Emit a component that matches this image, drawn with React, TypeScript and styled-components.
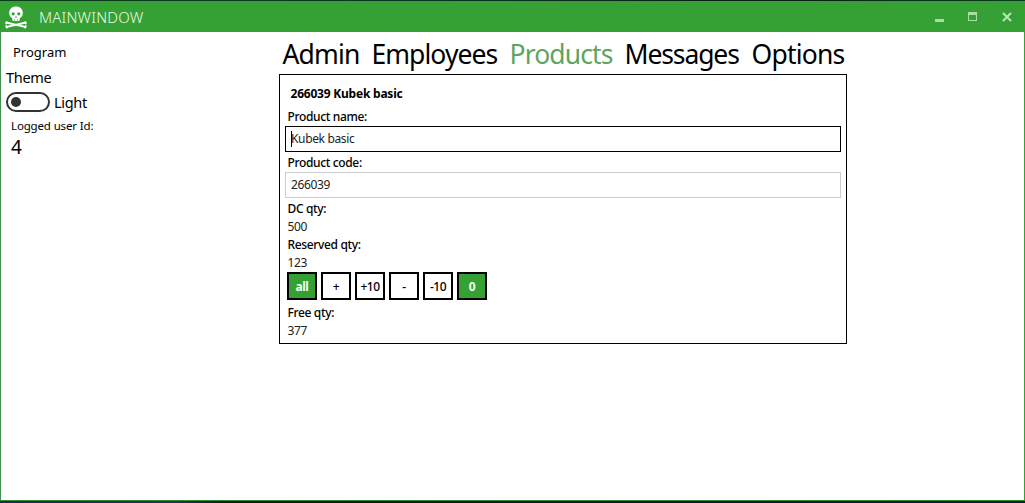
import React from 'react';
import styled, { createGlobalStyle } from 'styled-components';

const GlobalStyle = createGlobalStyle`
  * { box-sizing: border-box; }
  html, body { margin: 0; padding: 0; overflow: hidden; background: #0b1f26; }
  body, button, input { font-family: "Noto Sans", "Open Sans", sans-serif; color: #000; }
`;

const Desktop = styled.div`
  width: 1025px;
  height: 503px;
  padding: 1px 0 2px;
  background: linear-gradient(90deg, #0a3a1c, #0c3322 40%, #071c12 75%, #0b3a1c) top / 100% 1px no-repeat,
    linear-gradient(90deg, #14304a, #1b3a50 17%, #071c12 22%, #081a1c 60%, #0b1c2c) bottom / 100% 2px no-repeat;
`;

const Window = styled.div`
  height: 500px;
  display: flex;
  flex-direction: column;
  background: #fff;
  border: solid #32a032;
  border-width: 0 1px 1px;
  border-left-color: #419151;
  border-bottom-color: #2d8a35;
`;

const TitleBar = styled.header`
  flex: none;
  height: 31px;
  margin: 0 -1px;
  padding-left: 4px;
  display: flex;
  align-items: center;
  background: #35a135;
  color: #e9fae4;
`;

const Title = styled.h1`
  margin: 0 auto 0 11px;
  font-size: 15px;
  line-height: 22px;
  font-weight: 300;
  letter-spacing: 0.2px;
`;

const WindowButtons = styled.svg`
  display: block;
  width: 102px;
  height: 31px;
`;

const Body = styled.div`
  flex: 1;
  display: flex;
`;

const Sidebar = styled.aside`
  width: 278px;
  padding: 10px 0 0 5px;
`;

const SideText = styled.div<{ $size: number; $line: number; $indent?: number; $spacing?: number }>`
  font-size: ${p => p.$size}px;
  line-height: ${p => p.$line}px;
  margin-left: ${p => p.$indent ?? 0}px;
  letter-spacing: ${p => p.$spacing ?? 0}px;
`;

const ToggleRow = styled.div`
  display: flex;
  align-items: center;
  height: 22px;
  margin-bottom: 4px;
  gap: 4px;
  font-size: 14.5px;
  letter-spacing: -0.3px;
`;

const Toggle = styled.span`
  width: 44px;
  height: 20px;
  border: 2px solid #333;
  border-radius: 10px;
  padding: 3px;
  display: block;

  &::after {
    content: '';
    display: block;
    width: 10px;
    height: 10px;
    border-radius: 50%;
    background: #333;
  }
`;

const Main = styled.main`
  width: 568px;
`;

const Nav = styled.nav`
  height: 42px;
  padding: 4px 0 0 3.5px;
  display: flex;
`;

const NavItem = styled.a<{ $width: number; $spacing: number; $active?: boolean }>`
  flex: none;
  width: ${p => p.$width}px;
  font-size: 26.5px;
  line-height: 36px;
  white-space: nowrap;
  letter-spacing: ${p => p.$spacing}px;
  color: ${p => (p.$active ? '#5fa561' : '#000')};
`;

const Panel = styled.section`
  height: 270px;
  border: 1px solid #000;
  padding: 10px 5px 0;
`;

const PanelTitle = styled.h2`
  margin: 0 0 5px 5.5px;
  font-size: 12px;
  line-height: 18px;
  font-weight: 700;
  letter-spacing: -0.22px;
`;

const Label = styled.div`
  padding-left: 2.5px;
  font-size: 12px;
  line-height: 18px;
  font-weight: 500;
  letter-spacing: -0.35px;
`;

const Value = styled.div`
  padding-left: 2.5px;
  font-size: 12px;
  line-height: 18px;
  color: #222;
  letter-spacing: -0.4px;
`;

const Field = styled.div<{ $focused?: boolean }>`
  display: flex;
  align-items: center;
  width: 556px;
  height: 26px;
  margin-bottom: 2px;
  padding-left: 5px;
  border: 1px solid ${p => (p.$focused ? '#000' : '#ccc')};
  font-size: 12px;
  line-height: 18px;
  color: #222;
  letter-spacing: -0.35px;
`;

const Caret = styled.span`
  width: 1px;
  height: 16px;
  margin-right: -1px;
  background: #000;
`;

const ButtonRow = styled.div`
  display: flex;
  gap: 4px;
  padding-left: 2px;
  margin-bottom: 4px;
`;

const QtyButton = styled.button<{ $accent?: boolean }>`
  width: 30px;
  height: 28px;
  padding: 1px 0 0;
  border: 2px solid #000;
  font-size: 12px;
  line-height: 18px;
  font-weight: ${p => (p.$accent ? 700 : 500)};
  letter-spacing: -0.45px;
  background: ${p => (p.$accent ? '#35a135' : '#fff')};
  color: ${p => (p.$accent ? '#f1ffec' : '#000')};
`;

const SkullIcon = () => (
  <svg width="24" height="24" viewBox="0 0 24 24" fill="#fff">
    <path d="M12 1.6C7.8 1.6 5.2 4.3 5.2 7.8c0 2.1.5 3.3 1.5 4.2.8.6 1.5.8 1.6 1.5v1.6c0 .6.4.9 1 .9h5.4c.6 0 1-.3 1-.9v-1.6c.1-.7.8-.9 1.6-1.5 1-.9 1.5-2.1 1.5-4.2 0-3.5-2.6-6.2-6.8-6.2z" />
    <g fill="#35a135">
      <circle cx="9.2" cy="8.8" r="1.6" />
      <circle cx="14.8" cy="8.8" r="1.6" />
      <path d="M12 10.5l1 2h-2zM10.3 14.2h.6v1.8h-.6zM13.1 14.2h.6v1.8h-.6z" />
    </g>
    <path d="M3 17.7l18 4.2M21 17.7L3 21.9" stroke="#fff" strokeWidth="1.9" />
    <g>
      <circle cx="2.6" cy="17.3" r="1.1" />
      <circle cx="2.2" cy="18.5" r="1" />
      <circle cx="21.4" cy="17.3" r="1.1" />
      <circle cx="21.8" cy="18.5" r="1" />
      <circle cx="2.2" cy="21.3" r="1" />
      <circle cx="2.8" cy="22.4" r="1" />
      <circle cx="21.8" cy="21.3" r="1" />
      <circle cx="21.2" cy="22.4" r="1" />
    </g>
  </svg>
);

const buttons = ['all', '+', '+10', '-', '-10', '0'];

const tabs = [
  { name: 'Admin', width: 89, spacing: -0.85 },
  { name: 'Employees', width: 138, spacing: -0.95 },
  { name: 'Products', width: 115, spacing: -0.9 },
  { name: 'Messages', width: 127, spacing: -1.12 },
  { name: 'Options', width: 94, spacing: -0.8 },
];

export default function App() {
  return (
    <>
      <GlobalStyle />
      <Desktop>
        <Window>
          <TitleBar>
            <SkullIcon />
            <Title>MAINWINDOW</Title>
            <WindowButtons viewBox="0 0 102 31">
              <path d="M12 18h9v3h-9z" fill="#a9dda4" />
              <path d="M45 11h9v9h-9z M46 14v5h7v-5z" fill="#a9dda4" fillRule="evenodd" />
              <path d="M80 12l8 8M88 12l-8 8" stroke="#b9e6b3" strokeWidth="2" />
            </WindowButtons>
          </TitleBar>
          <Body>
            <Sidebar>
              <SideText $size={13} $line={21} $indent={7}>Program</SideText>
              <SideText $size={14.5} $line={28} $spacing={-0.3}>Theme</SideText>
              <ToggleRow>
                <Toggle />
                <span>Light</span>
              </ToggleRow>
              <SideText $size={11.5} $line={18} $indent={5} $spacing={-0.15}>Logged user Id:</SideText>
              <SideText $size={19} $line={24} $indent={5}>4</SideText>
            </Sidebar>
            <Main>
              <Nav>
                {tabs.map(t => (
                  <NavItem key={t.name} $width={t.width} $spacing={t.spacing} $active={t.name === 'Products'}>
                    {t.name}
                  </NavItem>
                ))}
              </Nav>
              <Panel>
                <PanelTitle>266039 Kubek basic</PanelTitle>
                <Label>Product name:</Label>
                <Field $focused><Caret />Kubek basic</Field>
                <Label>Product code:</Label>
                <Field>266039</Field>
                <Label>DC qty:</Label>
                <Value>500</Value>
                <Label>Reserved qty:</Label>
                <Value>123</Value>
                <ButtonRow>
                  {buttons.map(b => (
                    <QtyButton key={b} $accent={b === 'all' || b === '0'}>{b}</QtyButton>
                  ))}
                </ButtonRow>
                <Label>Free qty:</Label>
                <Value>377</Value>
              </Panel>
            </Main>
          </Body>
        </Window>
      </Desktop>
    </>
  );
}
